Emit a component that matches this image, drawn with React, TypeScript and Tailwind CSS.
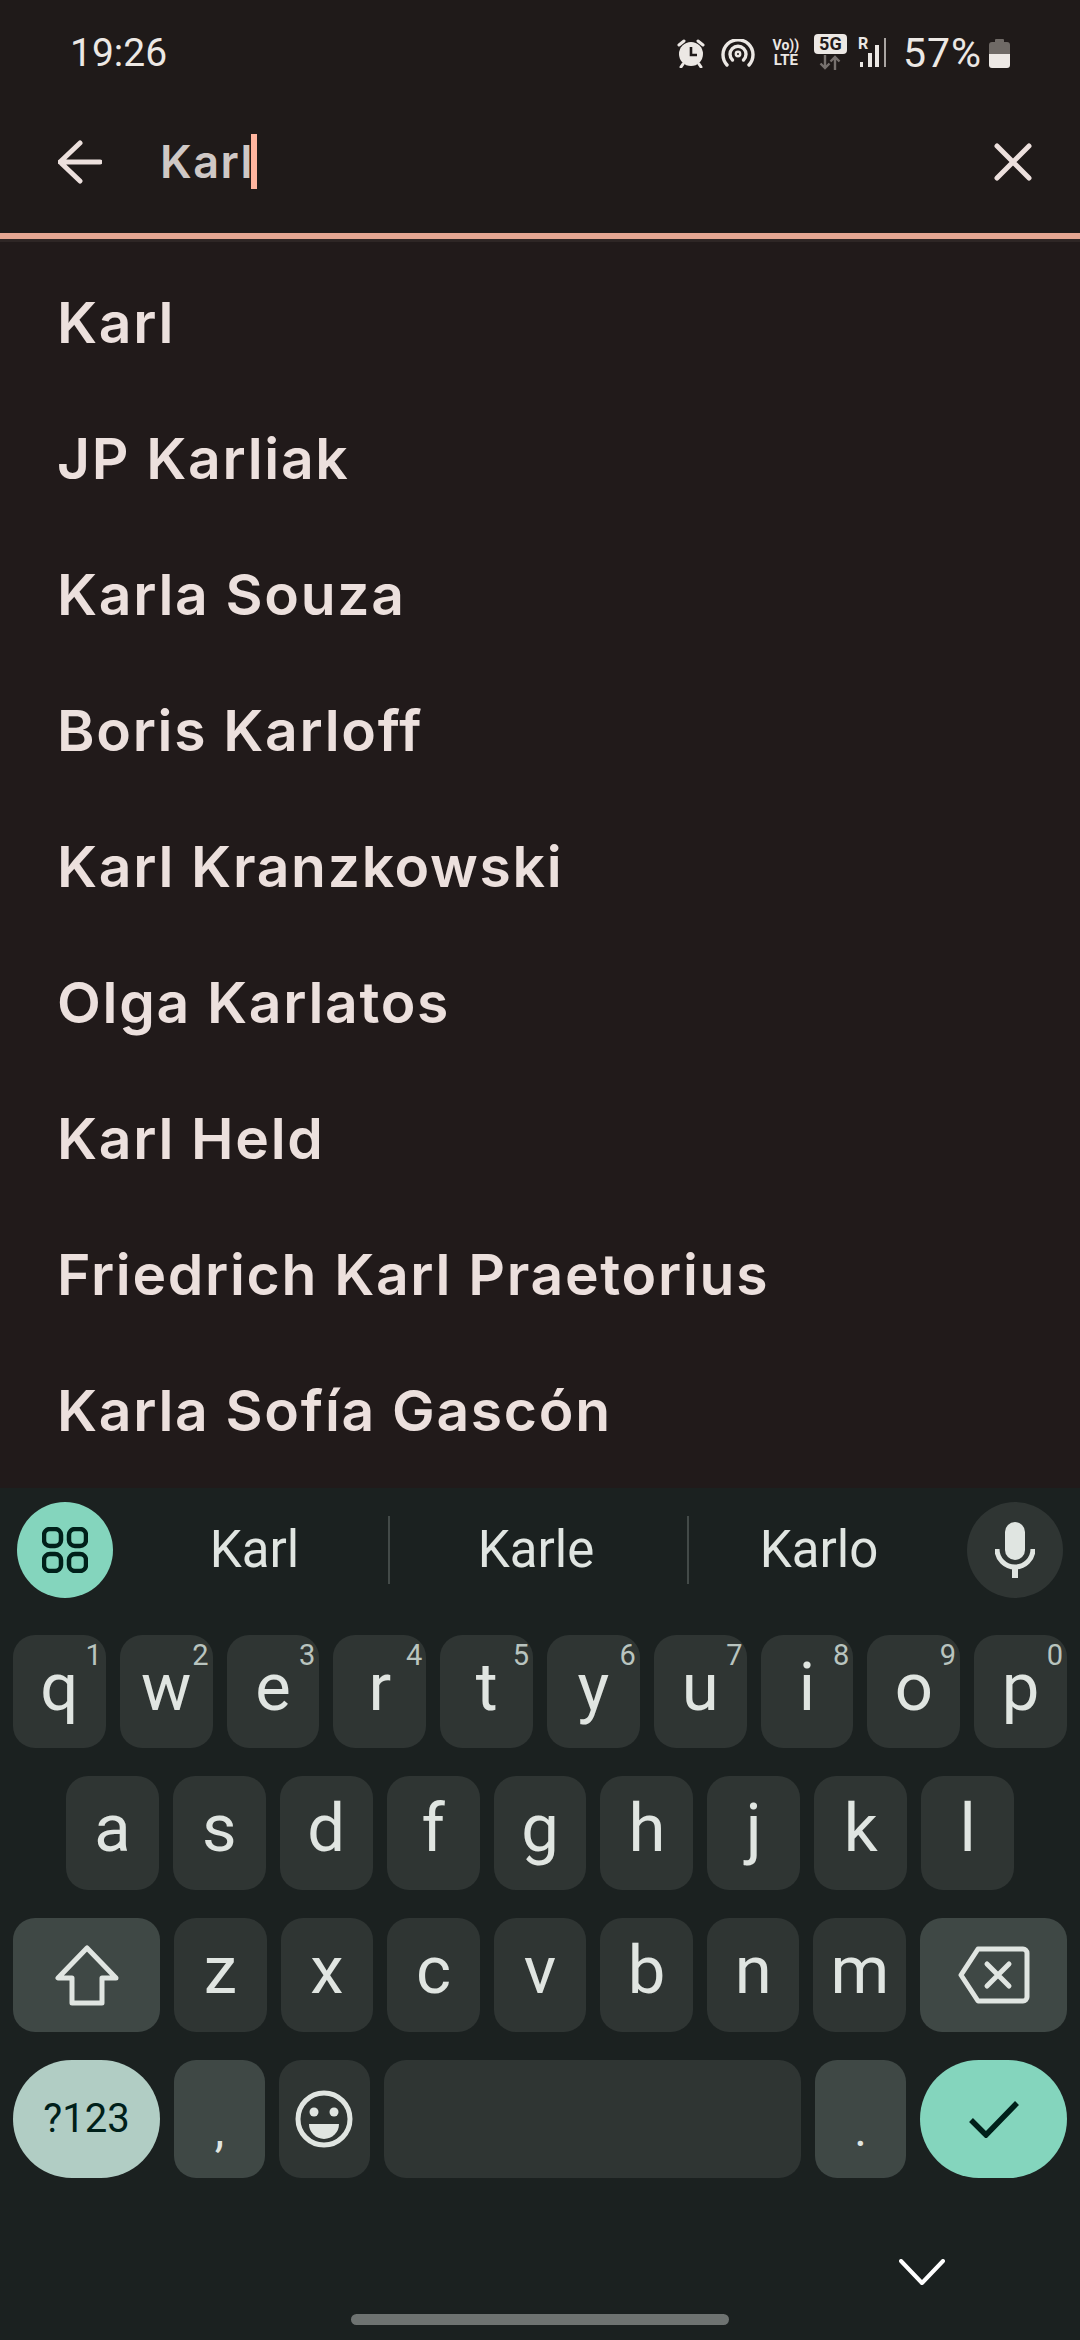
import type { ReactNode } from 'react';

const people = [
  'Karl',
  'JP Karliak',
  'Karla Souza',
  'Boris Karloff',
  'Karl Kranzkowski',
  'Olga Karlatos',
  'Karl Held',
  'Friedrich Karl Praetorius',
  'Karla Sofía Gascón',
];

const topRow = [
  ['q', '1'], ['w', '2'], ['e', '3'], ['r', '4'], ['t', '5'],
  ['y', '6'], ['u', '7'], ['i', '8'], ['o', '9'], ['p', '0'],
];

function Key({ label, hint }: { label: string; hint?: string }) {
  return (
    <div className="relative flex-1 flex items-center justify-center rounded-[22px] bg-[#2f3533] text-[67px] leading-none text-[#e0e5e1] pb-[9px]">
      {label}
      {hint && <span className="absolute top-[5px] right-[4px] text-[29px] leading-[30px] text-[#b9c4bf]">{hint}</span>}
    </div>
  );
}

function FnKey({ children, tone = 'bg-[#3f4845]' }: { children: ReactNode; tone?: string }) {
  return <div className={`w-[147px] shrink-0 flex items-center justify-center ${tone}`}>{children}</div>;
}

function StatusIcons() {
  return (
    <div className="flex items-center text-[#ece8e4]">
      <svg width="30" height="30" viewBox="0 0 30 30" className="mr-[15px]">
        <circle cx="15" cy="16" r="12" fill="#ece8e4" />
        <path d="M3 7l5-4M27 7l-5-4M7 26l-2 3M23 26l2 3" stroke="#ece8e4" strokeWidth="3" strokeLinecap="round" />
        <path d="M15 9v8h6" stroke="#1f1a19" strokeWidth="2.6" fill="none" />
      </svg>
      <svg width="34" height="28" viewBox="0 0 34 28" fill="none" stroke="#ece8e4" strokeWidth="3.4" strokeLinecap="round" className="mr-[16px]">
        <path d="M6 26A15 15 0 1 1 28 26" />
        <path d="M11.5 21A8 8 0 1 1 22.5 21" />
        <circle cx="17" cy="15" r="2.2" strokeWidth="2.4" />
      </svg>
      <div className="flex flex-col items-center w-[30px] font-bold text-[14px] leading-[15px] mr-[13px]">
        <span>Vo))</span>
        <span className="text-[15px]">LTE</span>
      </div>
      <div className="flex flex-col items-center w-[33px] mb-[2px] mr-[10px]">
        <span className="w-[33px] h-[20px] rounded-[4px] bg-[#ece8e4] text-[#1f1a19] text-[18px] leading-[20px] font-bold text-center">5G</span>
        <svg width="24" height="15" viewBox="0 0 24 15" fill="none" stroke="#77716e" strokeWidth="2.4" className="mt-[1px]">
          <path d="M7 0v13M2.5 8.5L7 13l4.5-4.5M17 15V2M12.5 6.5L17 2l4.5 4.5" />
        </svg>
      </div>
      <div className="relative w-[30px] h-[30px] mr-[16px]">
        <span className="absolute top-[-3px] left-[1px] text-[16px] leading-[18px] font-bold">R</span>
        <svg width="30" height="30" viewBox="0 0 30 30" fill="#ece8e4" className="absolute top-0 left-0">
          <rect x="3" y="24" width="3" height="5" />
          <rect x="11" y="15" width="4" height="14" />
          <rect x="18" y="7" width="4" height="22" />
          <rect x="27" y="0" width="2" height="29" fill="#aaa5a2" />
        </svg>
      </div>
      <span className="text-[41px] tracking-[1px] leading-none mr-[7px]">57%</span>
      <svg width="21" height="30" viewBox="0 0 21 30">
        <path d="M6 2a1 1 0 0 1 1-1h7a1 1 0 0 1 1 1v2h3a3 3 0 0 1 3 3v9H0V7a3 3 0 0 1 3-3h3z" fill="#6f6a66" />
        <path d="M0 16h21v11a3 3 0 0 1-3 3H3a3 3 0 0 1-3-3z" fill="#ece8e4" />
      </svg>
    </div>
  );
}

export default function App() {
  return (
    <div className="w-[1080px] h-[2340px] flex flex-col bg-[#1f1a19] font-['Roboto',sans-serif] overflow-hidden">
      <div className="h-[106px] shrink-0 px-[70px] flex items-center justify-between">
        <span className="text-[39px] text-[#ece8e4] leading-none">19:26</span>
        <StatusIcons />
      </div>

      <div className="h-[127px] shrink-0 flex items-center pl-[58px] pr-[48px] pb-[16px]">
        <svg width="44" height="44" viewBox="0 0 44 44" fill="none" stroke="#ece0dd" strokeWidth="5" strokeLinecap="round" strokeLinejoin="round">
          <path d="M42 22H2M22 3L2 22l20 19" />
        </svg>
        <div className="flex-1 flex items-center pl-[58px] font-['Inter',sans-serif] font-semibold tracking-[1.5px] text-[45px] text-[#cfc8c5] leading-none">
          Karl
          <span className="w-[6px] h-[55px] ml-[-3px] bg-[#ffb59f]" />
        </div>
        <svg width="38" height="38" viewBox="0 0 38 38" fill="none" stroke="#ece0dd" strokeWidth="5" strokeLinecap="round">
          <path d="M3 3l32 32M35 3L3 35" />
        </svg>
      </div>
      <div className="h-[6px] shrink-0 bg-[#e5a692]" />
      <div className="h-[3px] shrink-0 bg-[#2e2625]" />

      <div className="flex-1 bg-[#211a1a] pt-[12px] px-[57px]">
        {people.map((name) => (
          <div key={name} className="h-[136px] flex items-center font-['Inter',sans-serif] font-semibold tracking-[1.7px] text-[57px] text-[#ece0dd] leading-none">
            {name}
          </div>
        ))}
      </div>

      <div className="h-[852px] shrink-0 bg-[#1b2120] flex flex-col">
        <div className="mt-[14px] h-[96px] px-[17px] flex items-center text-[51px] text-[#e0e5e1]">
          <div className="w-[96px] h-[96px] rounded-full bg-[#84d5bd] flex items-center justify-center">
            <svg width="46" height="46" viewBox="0 0 46 46" fill="none" stroke="#00201a" strokeWidth="4.5">
              <rect x="2" y="2" width="17" height="17" rx="6" />
              <rect x="27" y="2" width="17" height="17" rx="6" />
              <rect x="2" y="27" width="17" height="17" rx="6" />
              <rect x="27" y="27" width="17" height="17" rx="6" />
            </svg>
          </div>
          <div className="flex-1 flex items-center">
            <span className="w-[275px] pl-[8px] text-center">Karl</span>
            <span className="w-[2px] h-[68px] bg-[#434a48]" />
            <span className="w-[297px] pr-[5px] text-center">Karle</span>
            <span className="w-[2px] h-[68px] bg-[#434a48]" />
            <span className="flex-1 pr-[18px] text-center">Karlo</span>
          </div>
          <div className="w-[96px] h-[96px] rounded-full bg-[#2f3533] flex items-center justify-center">
            <svg width="40" height="56" viewBox="0 0 40 56">
              <rect x="10" y="0" width="20" height="38" rx="10" fill="#e0e5e1" />
              <path d="M2 27a18 18 0 0 0 36 0" fill="none" stroke="#e0e5e1" strokeWidth="5" />
              <path d="M20 44v12" stroke="#e0e5e1" strokeWidth="6" />
            </svg>
          </div>
        </div>

        <div className="mt-[37px] px-[13px] flex flex-col gap-[28px]">
          <div className="h-[113px] flex gap-[14px]">
            {topRow.map(([l, n]) => <Key key={l} label={l} hint={n} />)}
          </div>
          <div className="h-[114px] flex gap-[14px] px-[53px]">
            {'asdfghjkl'.split('').map((l) => <Key key={l} label={l} />)}
          </div>
          <div className="h-[114px] flex gap-[14px]">
            <FnKey tone="bg-[#3f4845] rounded-[22px]">
              <svg width="64" height="61" viewBox="0 0 64 61" fill="none" stroke="#e0e5e1" strokeWidth="5" strokeLinejoin="round">
                <path d="M32 3L3 33h14v25h30V33h14z" />
              </svg>
            </FnKey>
            {'zxcvbnm'.split('').map((l) => <Key key={l} label={l} />)}
            <FnKey tone="bg-[#3f4845] rounded-[22px]">
              <svg width="72" height="58" viewBox="0 0 72 58" fill="none" stroke="#e0e5e1" strokeWidth="5" strokeLinejoin="round">
                <path d="M3 29L20 3h45a4 4 0 0 1 4 4v44a4 4 0 0 1-4 4H20z" />
                <path d="M29 18l22 22M51 18L29 40" strokeLinecap="round" />
              </svg>
            </FnKey>
          </div>
          <div className="h-[118px] flex gap-[14px]">
            <FnKey tone="bg-[#b1cdc4] rounded-full">
              <span className="text-[40px] text-[#00201a] leading-none">?123</span>
            </FnKey>
            <div className="flex-1 rounded-[22px] bg-[#3f4845] flex items-center justify-center text-[48px] text-[#e0e5e1] leading-none pt-[22px]">,</div>
            <div className="flex-1 rounded-[22px] bg-[#2f3533] flex items-center justify-center">
              <svg width="58" height="58" viewBox="0 0 58 58">
                <circle cx="29" cy="29" r="26" fill="none" stroke="#e0e5e1" strokeWidth="5" />
                <circle cx="19" cy="22" r="4.5" fill="#e0e5e1" />
                <circle cx="39" cy="22" r="4.5" fill="#e0e5e1" />
                <path d="M14 34h30a15 15 0 0 1-30 0z" fill="#e0e5e1" />
              </svg>
            </div>
            <div className="flex-[4.6] rounded-[22px] bg-[#2f3533]" />
            <div className="flex-1 rounded-[22px] bg-[#3f4845] flex items-center justify-center text-[48px] text-[#e0e5e1] leading-none pt-[22px]">.</div>
            <FnKey tone="bg-[#84d5bd] rounded-full">
              <svg width="50" height="38" viewBox="0 0 50 38" fill="none" stroke="#00201a" strokeWidth="5.5">
                <path d="M2 20l15 15L48 3" />
              </svg>
            </FnKey>
          </div>
        </div>

        <svg width="46" height="26" viewBox="0 0 46 26" fill="none" stroke="#ffffff" strokeWidth="4" strokeLinecap="round" strokeLinejoin="round" className="mt-[81px] self-end mr-[135px]">
          <path d="M2 2l21 22L44 2" />
        </svg>
        <div className="mt-[29px] mx-auto w-[378px] h-[11px] rounded-full bg-[#6e7371]" />
      </div>
    </div>
  );
}
